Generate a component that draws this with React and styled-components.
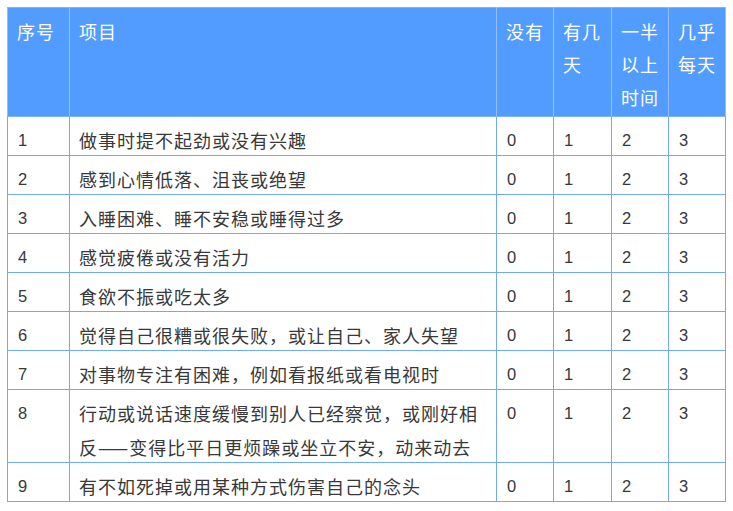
import styled, { createGlobalStyle } from "styled-components";

const GlobalStyle = createGlobalStyle`
  body {
    margin: 0;
    background: #ffffff;
    font-family: "Liberation Sans", "Noto Sans CJK SC", sans-serif;
  }
`;

const Page = styled.div`
  padding: 7px 8px 7px 7px;
`;

const Table = styled.table`
  width: 718px;
  table-layout: fixed;
  border-collapse: collapse;
  border: 1px solid #7fb1ff;
  font-size: 18px;
  letter-spacing: 1px;
  color: #383838;
`;

const HeadCell = styled.th`
  background: #529bff;
  color: #ffffff;
  font-weight: 400;
  text-align: left;
  vertical-align: top;
  line-height: 33px;
  padding: 9px 7px 0 9px;
  height: 99px;
  border: 1px solid #94c0ff;
  border-top-color: #7fb1ff;
  border-bottom-color: #7fb1ff;
`;

const Cell = styled.td`
  vertical-align: top;
  padding: 6px 7px 0 ${(p) => (p.$num ? 10 : 9)}px;
  border: 1px solid #6fa8ff;
  font-size: ${(p) => (p.$num ? "16.5px" : "18px")};
  font-family: ${(p) =>
    p.$num
      ? `"Liberation Sans", "Noto Sans CJK SC", sans-serif`
      : `"Noto Sans CJK SC", "Liberation Sans", sans-serif`};
`;

const CellText = styled.div`
  line-height: 34px;
  margin-bottom: -2px;
`;

const columns = [
  { label: "序号", width: 62 },
  { label: "项目", width: 427 },
  { label: "没有", width: 57 },
  { label: "有几天", width: 58 },
  { label: "一半以上时间", width: 57 },
  { label: "几乎每天", width: 57 },
];

const items = [
  "做事时提不起劲或没有兴趣",
  "感到心情低落、沮丧或绝望",
  "入睡困难、睡不安稳或睡得过多",
  "感觉疲倦或没有活力",
  "食欲不振或吃太多",
  "觉得自己很糟或很失败，或让自己、家人失望",
  "对事物专注有困难，例如看报纸或看电视时",
  "行动或说话速度缓慢到别人已经察觉，或刚好相反——变得比平日更烦躁或坐立不安，动来动去",
  "有不如死掉或用某种方式伤害自己的念头",
];

export default function App() {
  return (
    <>
      <GlobalStyle />
      <Page>
        <Table>
          <colgroup>
            {columns.map((c) => (
              <col key={c.label} style={{ width: c.width }} />
            ))}
          </colgroup>
          <thead>
            <tr>
              {columns.map((c) => (
                <HeadCell key={c.label}>{c.label}</HeadCell>
              ))}
            </tr>
          </thead>
          <tbody>
            {items.map((text, i) => (
              <tr key={i}>
                <Cell $num>
                  <CellText>{i + 1}</CellText>
                </Cell>
                <Cell>
                  <CellText>{text}</CellText>
                </Cell>
                {[0, 1, 2, 3].map((score) => (
                  <Cell key={score} $num>
                    <CellText>{score}</CellText>
                  </Cell>
                ))}
              </tr>
            ))}
          </tbody>
        </Table>
      </Page>
    </>
  );
}
